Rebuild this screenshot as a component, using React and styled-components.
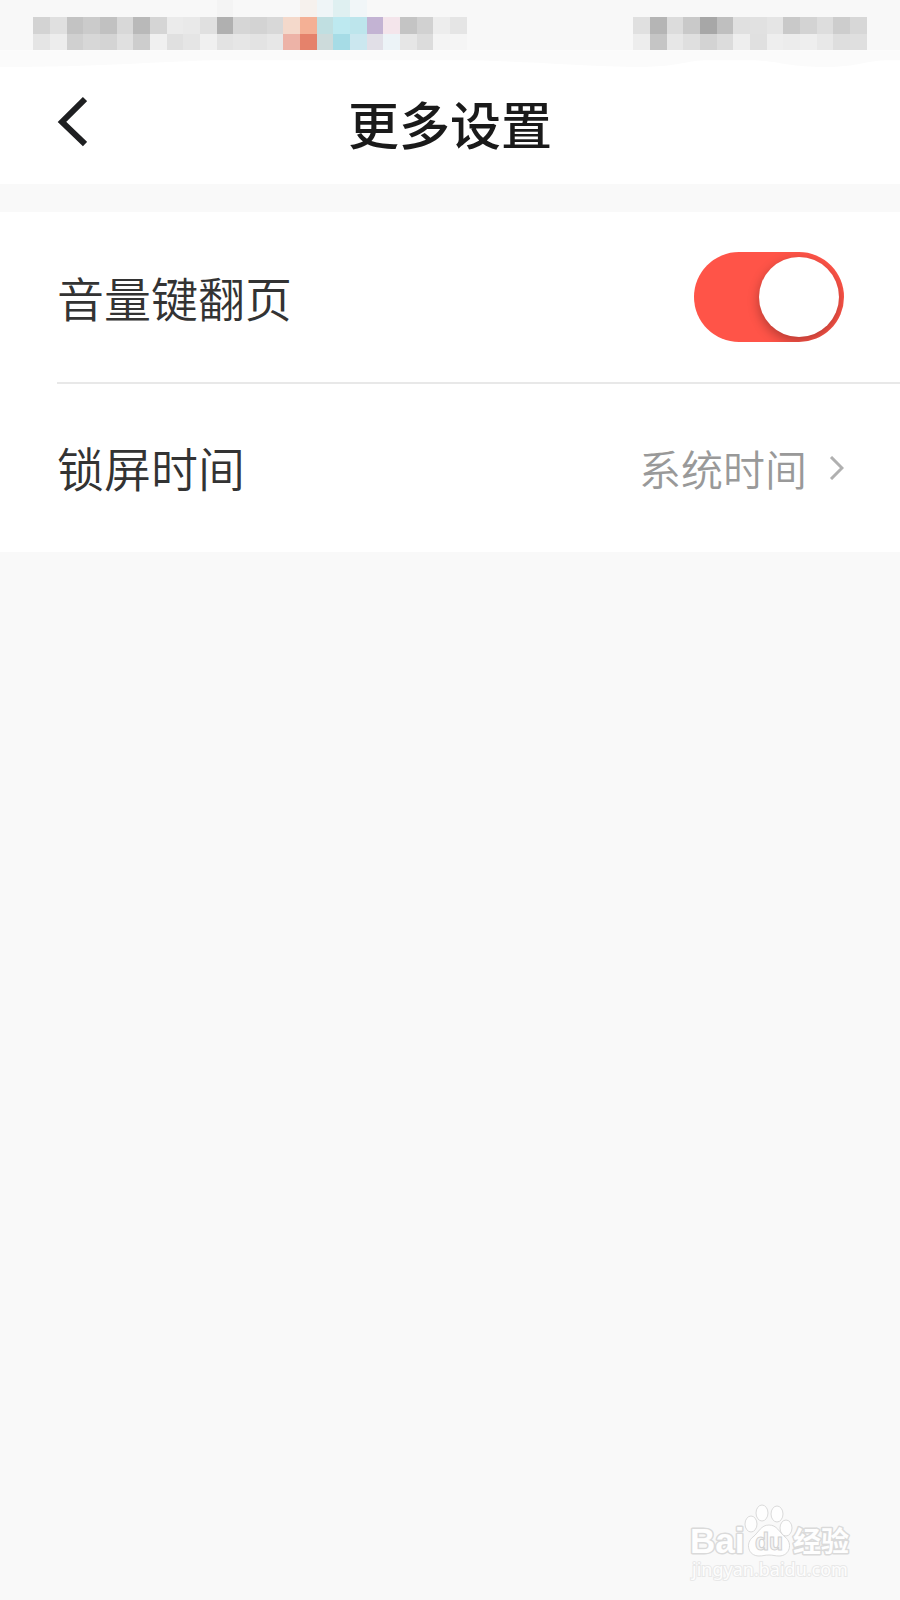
import React, { useState } from "react"
import styled, { createGlobalStyle } from "styled-components"

// mosaic rows: [first column, colours...]
const mosaic = [
    { row: 0, col: 13, cells: ["#f4f4f4"] },
    { row: 0, col: 18, cells: ["#f6f1ed", "#eff5f7", "#dff0f1", "#f1f6f8"] },
    {
        row: 1, col: 2, cells: [
            "#d3d3d3", "#e0e0e0", "#c3c3c3", "#cbcbcb", "#c1c1c1", "#d8d8d8", "#b9b9b9",
            "#d5d5d5", "#ebebeb", "#e9e9e9", "#e0e0e0", "#b0b0b0", "#d6d6d6", "#d3d3d3",
            "#d8d8d8", "#f4d9cb", "#f4b095", "#c0dfe1", "#bde9f0", "#bde5ec", "#c3b3d3",
            "#f4e5eb", "#c4c4c4", "#d1d1d1", "#ededed", "#e5e5e5",
        ],
    },
    {
        row: 2, col: 2, cells: [
            "#e5e5e5", "#ededed", "#d0d0d0", "#d7d7d7", "#d4d4d4", "#e0e0e0", "#cdcdcd",
            "#f0f0f0", "#e0e0e0", "#e5e5e5", "#f0f0f0", "#e3e3e3", "#e6e6e6", "#e3e3e3",
            "#e7e7e7", "#edb3a7", "#e5826b", "#cddbdb", "#a6dce6", "#cbe7ef", "#e1dfe7",
            "#ecf3f7", "#e6e6e6", "#dcdcdc", "#f4f4f4", "#f5f5f5",
        ],
    },
    {
        row: 1, col: 38, cells: [
            "#e0e0e0", "#b5b5b5", "#dcdcdc", "#c9c9c9", "#a7a7a7", "#bfbfbf", "#e0e0e0",
            "#e1e1e1", "#e5e5e5", "#c9c9c9", "#d3d3d3", "#dddddd", "#cdcdcd", "#d7d7d7",
        ],
    },
    {
        row: 2, col: 38, cells: [
            "#ededed", "#c5c5c5", "#e7e7e7", "#dfdfdf", "#d3d3d3", "#dcdcdc", "#eeeeee",
            "#e0e0e0", "#eeeeee", "#ececec", "#eeeeee", "#e8e8e8", "#dedede", "#dfdfdf",
        ],
    },
]

const StatusMosaic = () => (
    <StatusDrawing viewBox="0 0 54 4" preserveAspectRatio="none" aria-hidden="true">
        <rect width="54" height="3" fill="#f8f8f8" />
        <path d="M0 3H54V3.6H53.4C52 3.6 51.5 4 49.5 4C47.2 4 46.6 3.6 45 3.6H42.6C41 3.6 41 4 38 4C34 3.9 31 3.6 27 3.6H13C9 3.7 6 4 0 4Z" fill="#fbfbfb" />
        <g shapeRendering="crispEdges">
            {mosaic.map(({ row, col, cells }) =>
                cells.map((fill, i) => (
                    <rect key={`${row}-${col + i}`} x={col + i} y={row} width="1" height="1" fill={fill} />
                ))
            )}
        </g>
    </StatusDrawing>
)

const BaiduLogo = () => (
    <svg width="164" height="60" viewBox="0 0 164 60" aria-hidden="true">
        <g fill="#fefefe" stroke="#dadada" strokeWidth="3" strokeLinejoin="round" paintOrder="stroke">
            <LogoText x="2" y="49" $size={35}>Bai</LogoText>
            <LogoText x="105" y="48" $size={28}>经验</LogoText>
        </g>
        <g fill="#fefefe" stroke="#dadada" strokeWidth="1">
            <ellipse cx="63" cy="20" rx="6" ry="8" />
            <ellipse cx="74" cy="9" rx="6" ry="8" />
            <ellipse cx="89" cy="10" rx="6" ry="8" />
            <ellipse cx="98" cy="24" rx="6" ry="8" />
            <path d="M81 21C73 21 71 28 65 33C57 39 60 52 71 52C75 52 77 51 81 51C85 51 87 52 91 52C102 52 105 39 97 33C91 28 89 21 81 21Z" />
        </g>
        <LogoText x="67" y="46" $size={23} fill="#f4f4f4" stroke="#d2d2d2" strokeWidth="1">du</LogoText>
    </svg>
)

const App = () => {
    const [volumePaging, setVolumePaging] = useState(true)

    return (
        <Page>
            <GlobalStyle />
            <StatusMosaic />
            <Header>
                <BackButton type="button" aria-label="返回">
                    <svg width="30" height="52" viewBox="0 0 30 52">
                        <path d="M28 3L5 26L28 48" fill="none" stroke="#1e1f21" strokeWidth="6" />
                    </svg>
                </BackButton>
                <Title>更多设置</Title>
            </Header>
            <SettingsList>
                <SettingRow>
                    <Label htmlFor="volumePaging">音量键翻页</Label>
                    <Toggle
                        type="checkbox"
                        id="volumePaging"
                        checked={volumePaging}
                        onChange={(e) => setVolumePaging(e.target.checked)}
                    />
                </SettingRow>
                <Divider />
                <SettingRow>
                    <Label as="span" id="lockTime">锁屏时间</Label>
                    <ValueButton type="button" aria-describedby="lockTime">
                        系统时间
                        <svg width="15" height="24" viewBox="0 0 15 24">
                            <path d="M2 1L13 12L2 23" fill="none" stroke="#b0b0b0" strokeWidth="3" />
                        </svg>
                    </ValueButton>
                </SettingRow>
            </SettingsList>
            <Watermark href="#">
                <BaiduLogo />
                <WatermarkUrl>jingyan.baidu.com</WatermarkUrl>
            </Watermark>
        </Page>
    )
}

export default App

const GlobalStyle = createGlobalStyle`
    * {
        box-sizing: border-box;
    }
    body {
        margin: 0;
        background-color: #f9f9f9;
        font-family: "Noto Sans CJK SC", sans-serif;
    }
`

const Page = styled.div`
    display: flex;
    flex-direction: column;
    min-height: 100vh;
`

const StatusDrawing = styled.svg`
    display: block;
    width: 100%;
    height: 67px;
    background-color: #fff;
`

const Header = styled.header`
    display: grid;
    grid-template-columns: 1fr auto 1fr;
    align-items: center;
    padding: 18px 57px 22px;
    background-color: #fff;
`

const BackButton = styled.button`
    display: flex;
    justify-self: start;
    padding: 0 0 4px;
    border: none;
    background: none;
    cursor: pointer;
`

const Title = styled.h1`
    margin: 0;
    color: #1a1a1a;
    font-size: 51px;
    font-weight: 500;
    line-height: 77px;
`

const SettingsList = styled.main`
    margin-top: 28px;
    background-color: #fff;
`

const SettingRow = styled.div`
    display: flex;
    align-items: center;
    justify-content: space-between;
    min-height: 170px;
    padding: 0 56px 0 57px;
`

const Divider = styled.hr`
    height: 2px;
    margin: 0 0 -2px 57px;
    border: none;
    background-color: #e8e8e8;
`

const Label = styled.label`
    color: #333;
    font-size: 47px;
    font-weight: 350;
    line-height: 70px;
`

const Toggle = styled.input`
    display: flex;
    align-items: center;
    width: 150px;
    height: 90px;
    margin: 0;
    padding: 0 5px;
    border-radius: 45px;
    background-color: ${({ checked }) => (checked ? "#ff5448" : "#ddd")};
    appearance: none;
    overflow: hidden;
    cursor: pointer;

    &::before {
        content: "";
        width: 80px;
        height: 80px;
        margin-left: ${({ checked }) => (checked ? "auto" : "0")};
        border-radius: 50%;
        background-color: #fff;
        box-shadow: 0 4px 12px rgba(0, 0, 0, 0.3);
    }
`

const ValueButton = styled.button`
    display: flex;
    align-items: center;
    gap: 22px;
    padding: 2px 0 0;
    border: none;
    background: none;
    color: #999;
    font-family: inherit;
    font-size: 42px;
    font-weight: 350;
    line-height: 70px;
    cursor: pointer;
`

const Watermark = styled.a`
    display: flex;
    flex-direction: column;
    align-items: center;
    align-self: flex-end;
    margin: auto 48px 21px 0;
    text-decoration: none;
`

const LogoText = styled.text`
    font-family: "Liberation Sans", "Noto Sans CJK SC", sans-serif;
    font-size: ${({ $size }) => $size}px;
    font-weight: 700;
`

const WatermarkUrl = styled.span`
    margin-top: -5px;
    color: #fdfdfd;
    font-family: "Noto Sans", sans-serif;
    font-size: 18px;
    line-height: 20px;
    -webkit-text-stroke: 2px #e8e8e8;
    paint-order: stroke fill;
`
